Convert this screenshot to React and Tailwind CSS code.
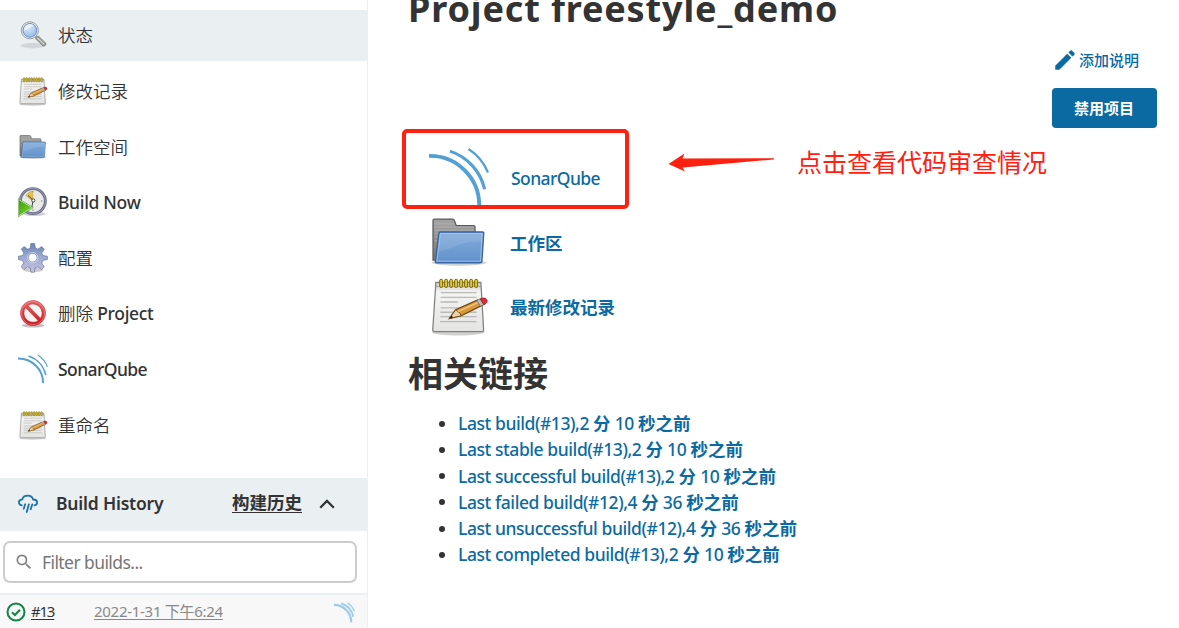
import React from "react";
import { MdEdit, MdSearch } from "react-icons/md";

function NotepadIcon({ className }) {
  return (
    <svg viewBox="0 0 48 48" className={className}>
      <defs>
        <linearGradient id="paper" x1="0" y1="0" x2="0" y2="1">
          <stop offset="0" stopColor="#c9c9c5" />
          <stop offset=".2" stopColor="#f4f4f3" />
          <stop offset="1" stopColor="#e4e4e2" />
        </linearGradient>
      </defs>
      <ellipse cx="23.5" cy="45" rx="21" ry="2.6" fill="#000" opacity=".18" />
      <path d="M5.5 5h36l2.2 38q0 1.500-1.500 1.500H4.500q-1.500 0-1.500-1.500z" fill="url(#paper)" stroke="#7f817c" strokeWidth="1" />
      <path d="M5.500 8.500h36.200" stroke="#999" strokeWidth=".7" />
      <path d="M9.500 13.300H38M9.300 17.100H38M9.200 20.800H23M9.200 25.500H38M9 29H38M9 32.500H38M8.800 36.500H38" stroke="#b9bab7" strokeWidth="1.100" />
      <g fill="#ddc535" stroke="#7d6a0a" strokeWidth=".8">
        {[8.500, 12.500, 16.500, 20.500, 24.500, 28.500, 32.500, 36.500].map((x) => (
          <rect key={x} x={x} y="2.600" width="2.400" height="6.600" rx="1.200" />
        ))}
      </g>
      <path d="M16.300 34l5-7 17.500-7.800 3.700 4.300-16.700 8.300z" fill="#d8983e" stroke="#704108" strokeWidth="1" />
      <path d="M16.300 34l5-7 1.500 1.500 1.500.6 1.500 2.700z" fill="#ecd3a4" stroke="#704108" strokeWidth=".7" />
      <path d="M16.300 34l1.700-2.600 1.200 1.700z" fill="#222" />
      <path d="M23 28.500l17-7.600" stroke="#f2c57a" strokeWidth="1.300" />
      <path d="M38 19.600l3-1.300 3.300 4.600-3 1.300z" fill="#b9bdb6" stroke="#666" strokeWidth=".6" />
      <path d="M41 18.200c2.300-1 4.500-.6 5.300.8.800 1.500-.200 3-2.500 3.900z" fill="#e32b2b" stroke="#8f1515" strokeWidth=".6" />
    </svg>
  );
}

function FolderIcon({ className }) {
  return (
    <svg viewBox="0 0 48 48" className={className}>
      <defs>
        <linearGradient id="folderFront" x1="0" y1="0" x2="0" y2="1">
          <stop offset="0" stopColor="#82abda" />
          <stop offset="1" stopColor="#6292cc" />
        </linearGradient>
        <linearGradient id="folderBack" x1="0" y1="0" x2="0" y2="1">
          <stop offset="0" stopColor="#a3a3a3" />
          <stop offset="1" stopColor="#777" />
        </linearGradient>
      </defs>
      <ellipse cx="24" cy="40.500" rx="22" ry="2.500" fill="#000" opacity=".18" />
      <path d="M3.200 38.500V6.600q0-1 1-1h14.600q1 0 1.400 1l1.600 4.200h14q1 0 1 1V38.500z" fill="url(#folderBack)" stroke="#5b5b5b" strokeWidth="1" />
      <path d="M4.300 9.500h16M4.300 12h32M4.300 14.500h32M4.300 17h4M4.300 20h3.500M4.300 23h3" stroke="#c1c1c1" strokeWidth=".6" opacity=".8" />
      <path d="M8.900 16h34q1 0 .9 1l-1.500 22.300q-.1 1.300-1.400 1.300H6q-1 0-.9-1.200L7.900 17q.1-1 1-1z" fill="url(#folderFront)" stroke="#3465a4" strokeWidth="1.100" />
      <path d="M9.100 17.200h33.500l-1.400 22.200H6.300z" fill="none" stroke="#b5cde9" strokeWidth=".7" opacity=".8" />
      <path d="M7.800 31c8-.5 15-5 22-6.500 5-1 9-1 12.300-1l.4-6H9.300z" fill="#fff" opacity=".1" />
    </svg>
  );
}

function SonarIcon({ className }) {
  return (
    <svg viewBox="0 0 48 48" className={className} fill="none" stroke="#549fd4">
      <path d="M0 7.100A39.500 39.500 0 0 1 40.200 46.600" strokeWidth="3.100" />
      <path d="M16.800 3.300A42 42 0 0 1 44.500 33.800" strokeWidth="2.500" />
      <path d="M31.600 1.600A41 41 0 0 1 47.200 20.400" strokeWidth="1.800" />
    </svg>
  );
}

function SmallSonarIcon({ className }) {
  return (
    <svg viewBox="0 0 21 21" className={className} fill="none" stroke="#9ccbec">
      <path d="M0 2.900A17.200 17.200 0 0 1 17.200 20.300" strokeWidth="2.300" />
      <path d="M7.200 1.400A18 18 0 0 1 19.200 14.800" strokeWidth="1.800" />
      <path d="M13.500.700A18 18 0 0 1 20.300 9" strokeWidth="1.300" />
    </svg>
  );
}

function RainIcon({ className }) {
  return (
    <svg viewBox="0 0 20 20" className={className} fill="none" stroke="#1a72a8" strokeWidth="1.800" strokeLinecap="round" strokeLinejoin="round">
      <path d="M3.800 11.400C2 11 .9 9.900 .9 8.300 .9 6.600 2.400 5.600 4.200 5.400 4.900 3.100 7 1.700 9.600 1.700c2.800 0 4.900 1.500 5.500 3.800 2.300.1 4 1.200 4 3.100 0 1.500-1 2.500-2.600 2.800" />
      <path d="M7.200 10.300l-1.500 4.400M10.900 10.300L8.700 18M14.300 10.300l-1.600 5" />
    </svg>
  );
}

function MagnifierIcon({ className }) {
  return (
    <svg viewBox="0 0 48 48" className={className}>
      <defs>
        <radialGradient id="lens" cx=".4" cy=".3" r=".8">
          <stop offset="0" stopColor="#d9e9fa" />
          <stop offset="1" stopColor="#8fb8e6" />
        </radialGradient>
      </defs>
      <ellipse cx="23" cy="41" rx="19" ry="4.500" fill="#000" opacity=".1" />
      <path d="M28.500 27l4-1.500L44.500 37c1.500 2-2 6-4.500 4.500L28 30z" fill="#9b9d98" stroke="#70726e" strokeWidth="1" />
      <path d="M31 28.500L42 39" stroke="#d8d9d5" strokeWidth="1.800" />
      <circle cx="19" cy="16.500" r="13.600" fill="#f3f3f3" stroke="#9a9c9a" strokeWidth="1.600" />
      <circle cx="19" cy="16.500" r="11" fill="url(#lens)" stroke="#5b86c2" strokeWidth="1.400" />
      <path d="M10 18a9.500 9.500 0 0 1 16-8.500c-7 1-11 4-16 8.500z" fill="#fff" opacity=".6" />
    </svg>
  );
}

function ClockIcon({ className }) {
  return (
    <svg viewBox="0 0 48 48" className={className}>
      <defs>
        <linearGradient id="play" x1="0" y1="0" x2="1" y2="1">
          <stop offset="0" stopColor="#3c9b0c" />
          <stop offset="1" stopColor="#7be02e" />
        </linearGradient>
      </defs>
      <ellipse cx="26" cy="43" rx="18" ry="3.500" fill="#000" opacity=".18" />
      <circle cx="23.800" cy="22.500" r="20" fill="#e9e9e5" stroke="#666988" strokeWidth="4.600" />
      <circle cx="23.800" cy="22.500" r="20.300" fill="none" stroke="#9a9dba" strokeWidth="1.600" />
      <path d="M23.800 22.500L12.500 13.500 18 8l5.500-1.500z" fill="#e8c04a" stroke="#b38b1b" strokeWidth=".6" />
      <path d="M24 21L16 13.500M24 22l-2 11" stroke="#444" strokeWidth="1.600" />
      <circle cx="24.500" cy="21.500" r="2.600" fill="#eee" stroke="#333" strokeWidth="1.300" />
      <g fill="#888">
        <circle cx="38" cy="22.500" r="1.200" />
        <circle cx="24" cy="37" r="1.200" />
        <circle cx="24" cy="7.500" r="1" />
      </g>
      <path d="M.700 19.500V46.500L23.500 33z" fill="url(#play)" stroke="#e8f5e0" strokeWidth="1.600" />
      <path d="M.500 18.500V47.500L24.500 33z" fill="none" stroke="#368010" strokeWidth=".9" />
    </svg>
  );
}

function GearIcon({ className }) {
  return (
    <svg viewBox="0 0 48 48" className={className}>
      <defs>
        <linearGradient id="gear" x1="0" y1="0" x2="0" y2="1">
          <stop offset="0" stopColor="#6883b3" />
          <stop offset=".45" stopColor="#98abd2" />
          <stop offset="1" stopColor="#c9c0e2" />
        </linearGradient>
      </defs>
      <ellipse cx="24" cy="43" rx="16" ry="3.500" fill="#000" opacity=".2" />
      <g fill="url(#gear)" stroke="#5f6b92" strokeWidth="1" strokeLinejoin="round">
        <path
          fillRule="evenodd"
          d="M20.500.8h6l1.200 7.200 4.200 1.800 6-4.200 4.300 4.300-4.200 6 1.800 4.100 7.200 1.200v5.200l-7.200 1.400-1.800 4.200 4 6.200-4.200 4-6.100-4-4.200 1.700-1.400 6.900h-5.200l-1.400-6.900-4.300-1.700-6 4-4-4 4-6.200-1.800-4.200L.500 26.400v-5.200L7.600 20l1.800-4.100-4.200-6 4.300-4.300 6 4.200 4.100-1.800zM23.500 16.500a7 7 0 1 0 .01 0z"
        />
      </g>
      <circle cx="23.500" cy="23.500" r="8.300" fill="none" stroke="#e7eaf5" strokeWidth="1" />
    </svg>
  );
}

function ProhibitIcon({ className }) {
  return (
    <svg viewBox="0 0 48 48" className={className}>
      <defs>
        <linearGradient id="stop" x1="0" y1="0" x2="0" y2="1">
          <stop offset="0" stopColor="#e86b6b" />
          <stop offset="1" stopColor="#cc1018" />
        </linearGradient>
      </defs>
      <ellipse cx="24" cy="42.500" rx="18" ry="3" fill="#000" opacity=".25" />
      <circle cx="24" cy="22.500" r="16.500" fill="#f3f3f2" />
      <path
        fillRule="evenodd"
        d="M24 2.500a20 20 0 1 0 .01 0zM15.800 10.200A14.800 14.800 0 0 1 36 31zM12.200 13.700A14.800 14.800 0 0 0 32.400 34.700z"
        fill="url(#stop)"
        stroke="#b51218"
        strokeWidth=".8"
      />
      <circle cx="24" cy="22.500" r="18.600" fill="none" stroke="#f4a5a5" strokeWidth=".9" />
    </svg>
  );
}

const FONT = "font-['Noto_Sans','Noto_Sans_CJK_SC',sans-serif]";

const tasks = [
  { Icon: MagnifierIcon, label: "状态", active: true, cls: "font-[350]" },
  { Icon: NotepadIcon, label: "修改记录", cls: "font-[350]" },
  { Icon: FolderIcon, label: "工作空间", cls: "font-[350]" },
  { Icon: ClockIcon, label: "Build Now", cls: "font-medium tracking-[-0.320px]" },
  { Icon: GearIcon, label: "配置", cls: "font-[350]" },
  { Icon: ProhibitIcon, label: "删除", latin: " Project", cls: "font-[350] -mt-px" },
  { Icon: SonarIcon, label: "SonarQube", cls: "font-medium tracking-[-0.580px]" },
  { Icon: NotepadIcon, label: "重命名", cls: "font-[350]" },
];

const links = [
  ["Last build(#13),2", "10"],
  ["Last stable build(#13),2", "10"],
  ["Last successful build(#13),2", "10"],
  ["Last failed build(#12),4", "36"],
  ["Last unsuccessful build(#12),4", "36"],
  ["Last completed build(#13),2", "10"],
];

function Sidebar() {
  return (
    <aside className="flex h-full w-[368px] shrink-0 flex-col border-r border-[#eaeff2] pt-[10px]">
      <nav className="flex flex-col gap-[5px]">
        {tasks.map(({ Icon, label, latin, active, cls }) => (
          <a
            key={label}
            className={`flex h-[50.700px] items-center gap-[10px] pl-[18px] text-[17.500px] ${active ? "bg-[#eaeff2]" : ""}`}
          >
            <Icon className="size-[30px]" />
            <span className={`whitespace-pre ${cls}`}>
              {label}
              {latin && <span className="font-medium tracking-[-0.320px]">{latin}</span>}
            </span>
          </a>
        ))}
      </nav>
      <div className="mt-[27px] flex h-[53px] shrink-0 items-center bg-[#eaeff2] pr-[32px] pb-[3px] pl-[18px] text-[17.500px] font-semibold">
        <RainIcon className="mt-[3px] size-[20px]" />
        <span className="mt-px ml-[18px] tracking-[-0.2px]">Build History</span>
        <span className="ml-auto underline underline-offset-[3px]">构建历史</span>
        <svg viewBox="0 0 16 10" className="mt-[3px] ml-[17px] h-[10px] w-[16px]" fill="none" stroke="#333" strokeWidth="2.300">
          <path d="M1.200 8.800L8 2l6.800 6.800" />
        </svg>
      </div>
      <div className="mt-[10px] mr-[10px] ml-[3px] flex h-[42px] shrink-0 items-center rounded-[7px] border-2 border-[#ccc] pl-[9px] text-[17.500px] text-[#757575]">
        <MdSearch className="size-[20px] text-[#808080]" />
        <span className="mt-[2px] ml-[8px] tracking-[-0.580px]">Filter builds...</span>
      </div>
      <div className="mt-[10px] flex h-[60px] shrink-0 items-start border-t-2 border-[#eaeff2] bg-[#f8f8f8] pt-[5px] pl-[6px] text-[15px] leading-[22px]">
        <svg viewBox="0 0 20 20" className="mt-[2px] size-[20px]" fill="none" stroke="#138347">
          <circle cx="10" cy="10" r="8.500" strokeWidth="2" />
          <path d="M6 10.300l2.900 2.700L14 7.700" strokeWidth="2" />
        </svg>
        <span className="ml-[5px] w-[63px] text-[#333]">
          <span className="tracking-[-1.200px] underline underline-offset-2">#13</span>
        </span>
        <span className="tracking-[-0.280px] text-[#888] underline underline-offset-2">2022-1-31 下午6:24</span>
        <SmallSonarIcon className="mt-[2px] mr-[12px] ml-auto size-[21px]" />
      </div>
    </aside>
  );
}

function Main() {
  return (
    <main className="relative flex h-full min-w-0 flex-1 flex-col pr-[22px] pl-[40px]">
      <h1 className="mt-[-15px] h-[48px] text-[36px] leading-[48px] font-bold tracking-[0.860px]">Project freestyle_demo</h1>
      <div className="mt-[15px] flex h-[80px] shrink-0 flex-col items-end">
        <a className="mr-[18px] flex h-[24px] items-center text-[15px] font-medium text-[#0b6aa2]">
          <MdEdit className="mr-[1px] size-[26px]" />
          添加说明
        </a>
        <button className="mt-[16px] flex h-[40px] w-[105px] items-center justify-center rounded-[4px] bg-[#0b6aa2] pr-px text-[15px] font-bold text-white">
          禁用项目
        </button>
      </div>
      <div className="mt-[19px] ml-[21px] flex flex-col gap-[4.500px] text-[17.500px] text-[#0b6aa2]">
        <a className="flex h-[60px] items-center gap-[22px] font-medium">
          <SonarIcon className="size-[60px]" />
          <span className="mt-[2px] tracking-[-0.580px]">SonarQube</span>
        </a>
        <a className="flex h-[60px] items-center gap-[21px] font-bold">
          <FolderIcon className="size-[60px]" />
          <span className="mt-[3px]">工作区</span>
        </a>
        <a className="flex h-[60px] items-center gap-[21px] font-bold">
          <NotepadIcon className="size-[60px]" />
          <span className="mt-[2px]">最新修改记录</span>
        </a>
      </div>
      <h2 className="mt-[14px] h-[48px] text-[35px] leading-[48px] font-bold">相关链接</h2>
      <ul className="mt-[12px] text-[17.500px]">
        {links.map(([head, seconds]) => (
          <li key={head} className="flex h-[26.250px] items-center">
            <span className="mt-px mr-[13px] ml-[31px] size-[6px] rounded-full bg-[#333]" />
            <a className="font-medium tracking-[-0.430px] whitespace-pre text-[#0b6aa2]">
              {head} <b className="font-bold tracking-normal">分</b> {seconds} <b className="font-bold tracking-normal">秒之前</b>
            </a>
          </li>
        ))}
      </ul>
      <div className="absolute top-[129px] left-[34px] h-[80px] w-[227px] rounded-[5px] border-4 border-[#ff2010]" />
      <div className="absolute top-[144px] left-[300px] flex items-center text-[25px] leading-[36px] text-[#ff2010]">
        <svg viewBox="0 0 108 20" className="mt-[1px] h-[20px] w-[108px]" fill="#ff2010">
          <path d="M.500 11L16.500.500 14.500 5.500 106 5.200V6.500L14.500 14.500 17 18.500z" />
        </svg>
        <span className="ml-[21px]">点击查看代码审查情况</span>
      </div>
    </main>
  );
}

export default function App() {
  return (
    <div className={`flex h-[628px] w-[1179px] overflow-hidden bg-white text-[#333] ${FONT}`} lang="zh-CN">
      <Sidebar />
      <Main />
    </div>
  );
}
